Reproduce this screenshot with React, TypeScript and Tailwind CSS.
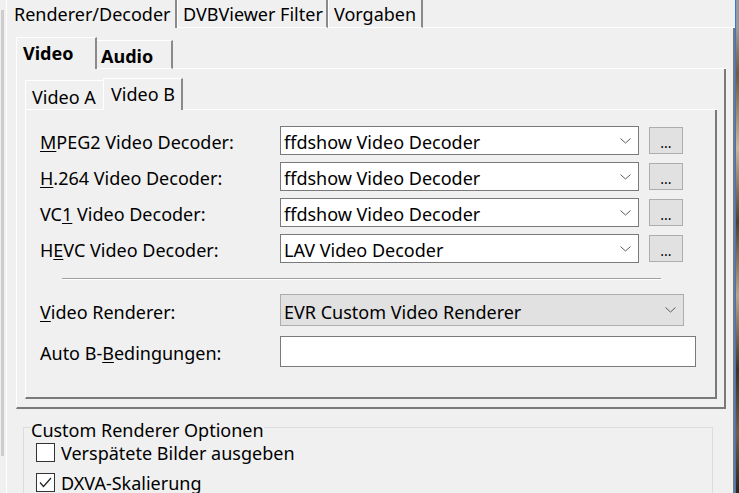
import React from 'react';

const decoders = [
    { pre: '', key: 'M', post: 'PEG2 Video Decoder:', value: 'ffdshow Video Decoder' },
    { pre: '', key: 'H', post: '.264 Video Decoder:', value: 'ffdshow Video Decoder' },
    { pre: 'VC', key: '1', post: ' Video Decoder:', value: 'ffdshow Video Decoder' },
    { pre: 'H', key: 'E', post: 'VC Video Decoder:', value: 'LAV Video Decoder' },
];

const Chevron = () => (
    <svg width="11" height="6" viewBox="0 0 11 6" className="shrink-0">
        <polyline points="0.5,0.5 5.5,5 10.5,0.5" fill="none" stroke="#5a5a5a" strokeWidth="1" />
    </svg>
);

const Combo = ({ value, w, h, gray }: { value: string; w: string; h: string; gray?: boolean }) => (
    <div className={`${w} ${h} flex items-center pl-[3px] pr-[7px] border ${gray ? 'bg-[#e1e1e1] border-[#adadad]' : 'bg-white border-[#7a7a7a]'}`}>
        <span className="flex-1 leading-none pt-[3px]">{value}</span>
        <Chevron />
    </div>
);

export default function App() {
    return (
        <div className="w-[739px] h-[493px] overflow-hidden bg-[#f0f0f0] flex text-black text-[18px] font-['Noto_Sans',sans-serif]">
            {/* left edge */}
            <div className="w-[6px] shrink-0">
                <div className="mt-[10px] ml-[1px] w-[3px] h-[446px] bg-[#cdcdcd]"></div>
            </div>

            {/* main tab control */}
            <div className="w-[729px] shrink-0 flex flex-col">
                <div className="h-[28px] flex">
                    <div className="w-[171px] border-l border-white border-r-2 border-r-[#8a8a8a] pl-[7px] leading-[28px]">Renderer/Decoder</div>
                    <div className="w-[151px] border-l border-white border-r-2 border-r-[#8a8a8a] border-b border-b-white pl-[5px] leading-[28px]">DVBViewer Filter</div>
                    <div className="w-[95px] border-l border-white border-r-2 border-r-[#8a8a8a] border-b border-b-white pl-[5px] leading-[28px]">Vorgaben</div>
                    <div className="flex-1 border-b border-white"></div>
                </div>
                <div className="flex-1 border-l border-white border-r-2 border-r-[#7a7a7a] pl-[9px] pr-[7px] pt-[9px]">
                    {/* Video / Audio */}
                    <div className="h-[32px] flex items-end">
                        <div className="w-[81px] h-[32px] border-l border-t border-white border-r-2 border-r-[#8a8a8a] pl-[6px] font-bold leading-[31px]">Video</div>
                        <div className="w-[76px] h-[29px] border-t border-white border-r-2 border-r-[#8a8a8a] border-b border-b-white pl-[4px] font-bold leading-[31px]">Audio</div>
                        <div className="flex-1 h-[29px] border-b border-white"></div>
                    </div>
                    <div className="h-[340px] border-l border-white border-r-2 border-r-[#7a7a7a] border-b-2 border-b-[#7a7a7a] pl-[8px] pr-[7px] pt-[9px]">
                        {/* Video A / Video B */}
                        <div className="h-[32px] flex items-end">
                            <div className="w-[78px] h-[30px] border-l border-t border-white border-b border-b-white pl-[6px] leading-[32px]">Video A</div>
                            <div className="w-[80px] h-[32px] border-l border-t border-white border-r-2 border-r-[#8a8a8a] pl-[7px] leading-[31px]">Video B</div>
                            <div className="flex-1 h-[30px] border-b border-white"></div>
                        </div>
                        <div className="h-[289px] border-l border-white border-r-2 border-r-[#7a7a7a] border-b-2 border-b-[#7a7a7a] pl-[14px] pt-[16px]">
                            <div className="flex flex-col gap-[7px]">
                                {decoders.map((d) => (
                                    <div key={d.post} className="flex items-center h-[29px]">
                                        <div className="w-[240px] leading-none pt-[3px]">
                                            {d.pre}<u className="underline-offset-2">{d.key}</u>{d.post}
                                        </div>
                                        <Combo value={d.value} w="w-[359px]" h="h-[29px]" />
                                        <div className="ml-[10px] w-[34px] h-[27px] bg-[#e1e1e1] border border-[#adadad] flex items-end justify-center leading-[20px] text-[14px]">...</div>
                                    </div>
                                ))}
                            </div>
                            <div className="mt-[15px] ml-[22px] w-[599px] border-t border-[#a0a0a0] border-b border-b-white"></div>
                            <div className="mt-[14px] flex items-center h-[32px]">
                                <div className="w-[240px] leading-none pt-[3px]"><u className="underline-offset-2">V</u>ideo Renderer:</div>
                                <Combo value="EVR Custom Video Renderer" w="w-[404px]" h="h-[32px]" gray />
                            </div>
                            <div className="mt-[10px] flex items-center h-[31px]">
                                <div className="w-[240px] leading-none pt-[3px]">Auto B-<u className="underline-offset-2">B</u>edingungen:</div>
                                <div className="w-[416px] h-[31px] bg-white border border-[#7a7a7a]"></div>
                            </div>
                        </div>
                    </div>

                    {/* group box */}
                    <fieldset className="mt-[6px] ml-[7px] w-[690px] h-[120px] border border-[#dcdcdc]">
                        <legend className="ml-[7px] leading-[20px] pt-[5px]">Custom Renderer Optionen</legend>
                        <div className="ml-[12px] flex items-center h-[20px] mt-[2px]">
                            <div className="w-[19px] h-[19px] border border-[#333333] bg-white"></div>
                            <span className="ml-[6px] leading-none pt-[2px]">Verspätete Bilder ausgeben</span>
                        </div>
                        <div className="ml-[12px] flex items-center h-[20px] mt-[10px]">
                            <div className="w-[19px] h-[19px] border border-[#333333] bg-white flex items-center justify-center">
                                <svg width="13" height="11" viewBox="0 0 13 11">
                                    <polyline points="1,5.5 4.5,9.5 12,1" fill="none" stroke="#222" strokeWidth="1.2" />
                                </svg>
                            </div>
                            <span className="ml-[6px] leading-none pt-[2px]">DXVA-Skalierung</span>
                        </div>
                    </fieldset>
                </div>
            </div>

            {/* window edge */}
            <div className="w-[1px] shrink-0 bg-[#2f7bd2]"></div>
            <div className="flex-1 bg-[linear-gradient(180deg,#9a9a9a_0%,#9a9a9a_6%,#6b5a44_15%,#c9b89a_30%,#4a4030_45%,#b8a88a_60%,#3b3226_75%,#6e6048_88%,#2a241c_100%)]"></div>
        </div>
    );
}
